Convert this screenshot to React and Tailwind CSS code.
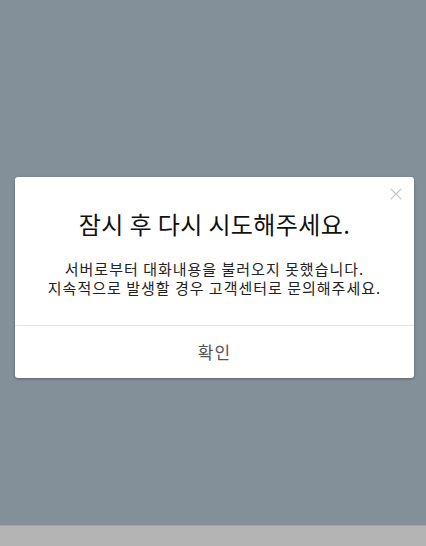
import { X } from 'lucide-react';

const font = { fontFamily: '"Noto Sans CJK KR", "Noto Sans", sans-serif' };

export default function App() {
  return (
    <div className="h-[546px] w-full flex flex-col overflow-hidden" style={font}>
      {/* dimmed overlay */}
      <div className="flex-1 bg-[#838f99] pt-[177px] pl-[15px]">
        <div className="relative w-[399px] bg-white rounded-[3px] shadow-[0_1px_3px_rgba(0,0,0,0.3)]">
          <button className="absolute right-[8px] top-[7px] text-[#c6c6c6]">
            <X size={20} strokeWidth={1.3} />
          </button>
          <div className="pt-[31px] pb-[28px] px-2 text-center">
            <h1 className="text-[24px] leading-[32px] tracking-[0.4px] text-[#111]">잠시 후 다시 시도해주세요.</h1>
            <p className="mt-[19px] text-[15px] leading-[19px] tracking-[1px] text-[#222]">
              서버로부터 대화내용을 불러오지 못했습니다.
              <br />
              지속적으로 발생할 경우 고객센터로 문의해주세요.
            </p>
          </div>
          <div className="border-t border-[#e4e4e4]">
            <button className="w-full h-[52px] text-[17px] tracking-[1px] text-[#555]">확인</button>
          </div>
        </div>
      </div>
      {/* page bar underneath */}
      <div className="h-[21px] bg-[#b4b4b4] border-t border-[#9ea3a8]"></div>
    </div>
  );
}
